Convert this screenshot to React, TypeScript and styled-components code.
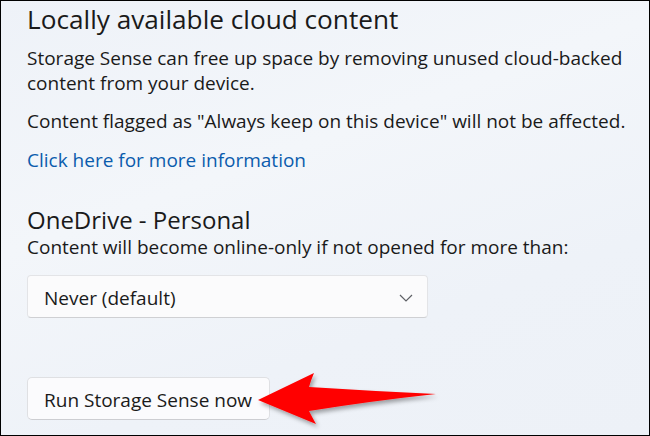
import React from 'react';
import styled, { createGlobalStyle } from 'styled-components';

const GlobalStyle = createGlobalStyle`
  html, body {
    margin: 0;
    padding: 0;
    background: #eef2f8;
  }
  * {
    box-sizing: border-box;
  }
`;

const Frame = styled.div`
  position: relative;
  width: 650px;
  height: 436px;
  border: 1px solid #000;
  overflow: hidden;
  padding: 1px 0 0 26px;
  background: linear-gradient(160deg, #eef2f8 0%, #f3f6fa 38%, #eef2f8 70%, #edf1f7 100%);
  font-family: 'Open Sans', 'Noto Sans', sans-serif;
  color: #1a1a1a;
`;

const Title = styled.h1`
  margin: 0;
  font-size: 26.2px;
  line-height: 34px;
  font-weight: 400;
`;

const SubTitle = styled.h2`
  margin: 33px 0 0;
  font-size: 24px;
  line-height: 28px;
  font-weight: 400;
`;

const Text = styled.p<{ $gap?: number }>`
  margin: ${({ $gap }) => $gap ?? 0}px 0 0;
  font-size: 19px;
  line-height: 25px;
  max-width: 616px;
`;

const Link = styled.a`
  display: block;
  margin-top: 14px;
  font-size: 19px;
  line-height: 25px;
  color: #0b5cad;
  text-decoration: none;
`;

const Select = styled.div`
  display: flex;
  align-items: center;
  justify-content: space-between;
  margin-top: 15px;
  width: 401px;
  height: 43px;
  padding: 2px 14px 0 16px;
  background: #fbfbfc;
  border: 1px solid #e3e4e7;
  border-bottom-color: #cfd0d3;
  border-radius: 4px;
  font-size: 19px;
`;

const Button = styled.button`
  display: block;
  margin-top: 59px;
  width: 243px;
  height: 43px;
  padding: 2px 0 0 16px;
  text-align: left;
  background: #fbfbfd;
  border: 1px solid #dfe0e3;
  border-bottom-color: #cdced2;
  border-radius: 5px;
  font-family: inherit;
  font-size: 19px;
  color: #1a1a1a;
`;

const Arrow = styled.svg`
  position: absolute;
  left: 250px;
  top: 364px;
  overflow: visible;
`;

const Chevron = () => (
  <svg width="14" height="8" viewBox="0 0 14 8" fill="none">
    <path d="M1 1l6 6 6-6" stroke="#5f6166" strokeWidth="1.2" />
  </svg>
);

export default function App() {
  return (
    <>
      <GlobalStyle />
      <Frame>
        <Title>Locally available cloud content</Title>
        <Text $gap={10}>
          Storage Sense can free up space by removing unused cloud-backed content from your device.
        </Text>
        <Text $gap={13}>Content flagged as "Always keep on this device" will not be affected.</Text>
        <Link href="#">Click here for more information</Link>
        <SubTitle>OneDrive - Personal</SubTitle>
        <Text $gap={1}>Content will become online-only if not opened for more than:</Text>
        <Select>
          <span>Never (default)</span>
          <Chevron />
        </Select>
        <Button>Run Storage Sense now</Button>
        <Arrow width="195" height="70" viewBox="0 0 195 70">
          <defs>
            <filter id="sh" x="-10%" y="-20%" width="130%" height="160%">
              <feDropShadow dx="2" dy="3" stdDeviation="2" floodColor="#000" floodOpacity="0.35" />
            </filter>
          </defs>
          <path
            d="M7 35 L63 8 Q60 15 58 22 Q120 26 185 29 Q120 36 58 46 Q61 52 65 59 Z"
            fill="#ff0000"
            filter="url(#sh)"
          />
        </Arrow>
      </Frame>
    </>
  );
}
